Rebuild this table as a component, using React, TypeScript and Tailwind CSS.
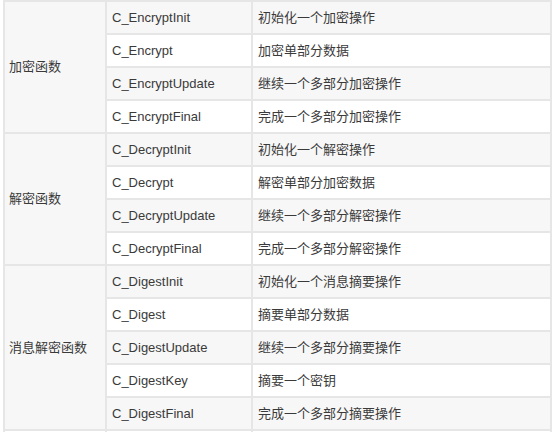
import React from "react";

const groups: { name: string; rows: [string, string][] }[] = [
  {
    name: "加密函数",
    rows: [
      ["C_EncryptInit", "初始化一个加密操作"],
      ["C_Encrypt", "加密单部分数据"],
      ["C_EncryptUpdate", "继续一个多部分加密操作"],
      ["C_EncryptFinal", "完成一个多部分加密操作"],
    ],
  },
  {
    name: "解密函数",
    rows: [
      ["C_DecryptInit", "初始化一个解密操作"],
      ["C_Decrypt", "解密单部分加密数据"],
      ["C_DecryptUpdate", "继续一个多部分解密操作"],
      ["C_DecryptFinal", "完成一个多部分解密操作"],
    ],
  },
  {
    name: "消息解密函数",
    rows: [
      ["C_DigestInit", "初始化一个消息摘要操作"],
      ["C_Digest", "摘要单部分数据"],
      ["C_DigestUpdate", "继续一个多部分摘要操作"],
      ["C_DigestKey", "摘要一个密钥"],
      ["C_DigestFinal", "完成一个多部分摘要操作"],
    ],
  },
];

export default function App() {
  let idx = 0;
  return (
    <div
      className="w-[554px] h-[432px] overflow-hidden bg-white pl-[3px] text-[13px] text-[#3a3a3a]"
      style={{ fontFamily: '"Liberation Sans", "Noto Sans CJK SC", sans-serif' }}
    >
      <table className="table-fixed border-collapse w-[549px]">
        <colgroup>
          <col className="w-[102px]" />
          <col className="w-[146px]" />
          <col />
        </colgroup>
        <tbody>
          {groups.map((g) =>
            g.rows.map((r, i) => {
              const stripe = idx % 2 === 0 ? "bg-[#f7f7f7]" : "bg-white";
              idx++;
              return (
                <tr key={r[0]} className={stripe}>
                  {i === 0 && (
                    <td
                      rowSpan={g.rows.length}
                      className="border-2 border-[#e6e6e6] bg-[#f7f7f7] px-[4px] py-0 align-middle"
                    >
                      {g.name}
                    </td>
                  )}
                  <td className="border-2 border-[#e6e6e6] h-[33px] px-[5px] py-0 align-middle">
                    {r[0]}
                  </td>
                  <td className="border-2 border-[#e6e6e6] h-[33px] px-[5px] py-0 align-middle">
                    {r[1]}
                  </td>
                </tr>
              );
            })
          )}
          <tr className="bg-white">
            <td className="border-2 border-[#e6e6e6] h-[33px]"></td>
            <td className="border-2 border-[#e6e6e6] h-[33px]"></td>
            <td className="border-2 border-[#e6e6e6] h-[33px]"></td>
          </tr>
        </tbody>
      </table>
    </div>
  );
}
